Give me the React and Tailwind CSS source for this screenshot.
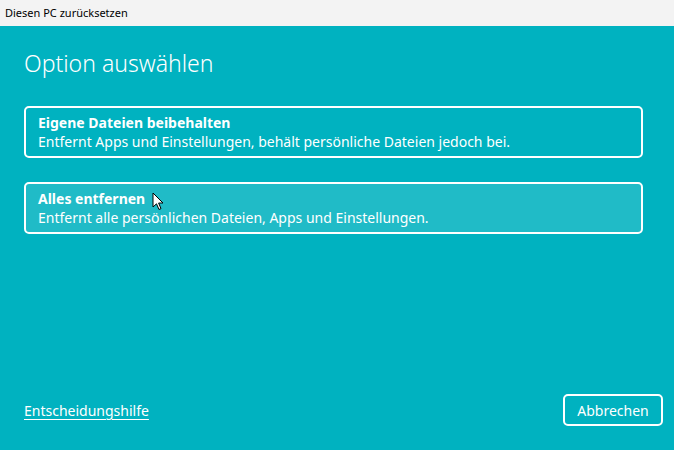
import React from 'react';

const font = { fontFamily: '"Noto Sans", "Open Sans", sans-serif' };

const Cursor = () => (
  <svg width="12" height="19" viewBox="0 0 12 19" className="absolute left-[152px] top-[192px]">
    <path d="M1 1 L1 15 L4.5 11.8 L7 17.5 L9 16.6 L6.6 11 L11 11 Z" fill="#fff" stroke="#000" strokeWidth="1" strokeLinejoin="round" />
  </svg>
);

const OptionCard = ({ title, text, hover }) => (
  <button
    className={`w-full h-[52px] text-left rounded-[5px] border-2 border-white px-[12px] flex flex-col justify-center ${hover ? 'bg-[#20bbc7]' : 'bg-transparent'}`}
  >
    <span className="text-white text-[14px] font-bold leading-[19px]">{title}</span>
    <span className="text-white text-[14px] leading-[19px]">{text}</span>
  </button>
);

export default function App() {
  return (
    <div className="w-[674px] h-[450px] flex flex-col relative overflow-hidden" style={font}>
      <div className="h-[26px] bg-[#f3f3f3] flex items-center px-[5px] text-[11px] text-black shrink-0">
        Diesen PC zurücksetzen
      </div>
      <div className="flex-1 bg-[#00b2c0] flex flex-col px-[24px]">
        <h1 className="text-white text-[23px] font-light mt-[21px] leading-[32px]">Option auswählen</h1>
        <div className="flex flex-col gap-[24px] mt-[27px] pr-[7px]">
          <OptionCard title="Eigene Dateien beibehalten" text="Entfernt Apps und Einstellungen, behält persönliche Dateien jedoch bei." />
          <OptionCard hover title="Alles entfernen" text="Entfernt alle persönlichen Dateien, Apps und Einstellungen." />
        </div>
        <div className="mt-auto mb-[24px] flex items-center justify-between mr-[-13px]">
          <a className="text-white text-[14px] underline underline-offset-[3px] decoration-1">Entscheidungshilfe</a>
          <button className="h-[32px] w-[100px] rounded-[5px] border-2 border-white text-white text-[14px]">Abbrechen</button>
        </div>
      </div>
      <Cursor />
    </div>
  );
}
